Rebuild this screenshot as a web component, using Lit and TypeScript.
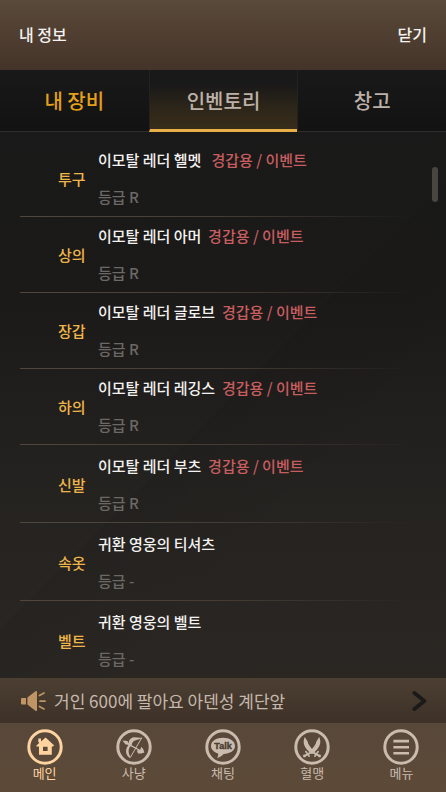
import { LitElement, html, css, svg, nothing } from "lit";
import { customElement, state } from "lit/decorators.js";
import { classMap } from "lit/directives/class-map.js";

interface Gear {
  slot: string;
  name: string;
  tag?: string;
  grade: string;
  roomy?: boolean;
}

const GEAR: Gear[] = [
  { slot: "투구", name: "이모탈 레더 헬멧   ", tag: "경갑용 / 이벤트", grade: "R" },
  { slot: "상의", name: "이모탈 레더 아머  ", tag: "경갑용 / 이벤트", grade: "R" },
  { slot: "장갑", name: "이모탈 레더 글로브  ", tag: "경갑용 / 이벤트", grade: "R" },
  { slot: "하의", name: "이모탈 레더 레깅스  ", tag: "경갑용 / 이벤트", grade: "R" },
  { slot: "신발", name: "이모탈 레더 부츠  ", tag: "경갑용 / 이벤트", grade: "R", roomy: true },
  { slot: "속옷", name: "귀환 영웅의 티셔츠", grade: "-", roomy: true },
  { slot: "벨트", name: "귀환 영웅의 벨트", grade: "-", roomy: true },
];

const TABS = ["내 장비", "인벤토리", "창고"];

const ring = svg`<circle cx="18" cy="18" r="16.2" fill="none" stroke="currentColor" stroke-width="3"/>`;

const house = svg`
  <path fill="currentColor" fill-rule="evenodd"
    d="M18.6 8.6 L27.2 16.6 L25.8 17.6 H24.8 V25.8 H12 V17.6 H9.6 L9.2 16.8 L12.4 13.8 L11.3 13 V9.4 H14 V12.4 Z M16 17.8 V22 H20.6 V17.8 Z"/>`;

const bow = svg`
  <path fill="currentColor"
    d="M26.4 8.4 C24.6 10.4 22 10.2 19.6 11.2 C16.8 12.2 16 13.8 15.8 16 C13.4 18.2 12.6 20 12.6 22.4 C12.6 25 14.4 26.6 14.2 29.2 C11.4 27.4 9.8 25 10 21.8 C10.2 19 11.6 17 12.8 15.8 C12.2 12.6 13.4 9.8 16.6 8.6 C20 7.6 23.2 9.6 26.4 8.4 Z"/>
  <path fill="none" stroke="currentColor" stroke-width="1" d="M25.8 8.8 L14.2 28.6"/>
  <path fill="none" stroke="currentColor" stroke-width="1.4" d="M9 13.4 L25 22"/>
  <path fill="currentColor"
    d="M6.4 11.6 L11.4 12 L13.4 15.4 L9.6 15.6 Z M20.8 21.6 L24.2 20.8 L25.4 17.8 L27.4 20.4 L28.4 23.6 L25.4 24.6 L22 24.6 Z"/>`;

const talk = svg`
  <path fill="currentColor"
    d="M18 8.8 C24.8 8.8 30 12 30 17 C30 21.6 25 24.8 18.6 25 C16.9 27 14.4 28.6 11.9 29.1 C13 27.6 13.4 26 13 24.4 C9 23.2 6 20.6 6 17 C6 12 11.2 8.8 18 8.8 Z"/>
  <text class="talk" x="18" y="20" text-anchor="middle">Talk</text>`;

const swords = svg`
  <g fill="currentColor">
    <path d="M10.8 8 C8.4 13.6 9.6 18.6 17.8 25 L20.6 22.4 C16.4 18.6 14 15 13.6 12.4 Z"/>
    <path d="M25.2 8 C27.6 13.6 26.4 18.6 18.2 25 L15.4 22.4 C19.6 18.6 22 15 22.4 12.4 Z"/>
  </g>
  <g fill="none" stroke="currentColor" stroke-linecap="round">
    <path stroke-width="2" d="M17 23.4 L10.8 26.8 M19 23.4 L25.2 26.8"/>
    <path stroke-width="1.6" d="M11.8 22.6 L15.2 27.2 M24.2 22.6 L20.8 27.2"/>
  </g>
  <circle cx="10.4" cy="27" r="1.4" fill="currentColor"/>
  <circle cx="25.6" cy="27" r="1.4" fill="currentColor"/>`;

const bars = svg`<path fill="currentColor" d="M10.4 10.8 H26 V13.4 H10.4 Z M10.4 16.9 H26 V19.5 H10.4 Z M10.4 23 H26 V25.6 H10.4 Z"/>`;

const NAV = [
  { label: "메인", icon: house, current: true },
  { label: "사냥", icon: bow },
  { label: "채팅", icon: talk },
  { label: "혈맹", icon: swords },
  { label: "메뉴", icon: bars },
];

@customElement("app-root")
export class AppRoot extends LitElement {
  @state() private selected = 1;

  static styles = css`
    :host {
      display: flex;
      flex-direction: column;
      min-height: 100vh;
      font-family: "Noto Sans CJK KR", "Noto Sans", sans-serif;
      font-size: 15px;
      line-height: 20px;
      color: #f4f2f0;
      background: linear-gradient(#191919 70px, #1b1a19 300px, #252320 500px, #2d2925);
    }
    button {
      font: inherit;
      color: inherit;
      background: none;
      border: 0;
      margin: 0;
      padding: 0;
      cursor: pointer;
    }
    svg {
      display: block;
    }
    .header {
      display: flex;
      align-items: center;
      justify-content: space-between;
      box-sizing: border-box;
      height: 70px;
      padding: 0 19px 2px;
      font-size: 16px;
      font-weight: 500;
      background: linear-gradient(#5a4a3a, #443328);
    }
    .title {
      margin: 0;
      font: inherit;
    }
    .tabs {
      display: grid;
      grid-template-columns: repeat(3, 1fr);
      height: 62px;
      background: linear-gradient(#191919, #121212);
    }
    .tab {
      font-size: 20px;
      font-weight: 500;
      color: #bcb1a8;
      border-bottom: 1px solid #302e2c;
    }
    .tab + .tab {
      border-left: 1px solid #24221f;
    }
    .tab.mine {
      color: #e5a01a;
    }
    .tab.active {
      padding-top: 2px;
      border-bottom: 3px solid #e9b04a;
      background: linear-gradient(#1a1919 25%, #2d2619 65%, #382d1a);
    }
    .content {
      position: relative;
      flex: 1;
    }
    .list {
      list-style: none;
      margin: 0;
      padding: 9px 20px 0;
      background: linear-gradient(135deg, transparent 50%, rgba(0, 0, 0, 0.06) 50%, transparent 70%);
    }
    .row {
      display: grid;
      grid-template-columns: 78px 1fr;
      align-items: center;
      padding: 9px 0;
      border-bottom: 1px solid;
      border-image: linear-gradient(90deg, #51473d, #453d35 50%, transparent 97%) 1;
    }
    .row.roomy {
      padding-top: 11px;
    }
    .row:last-child {
      border-bottom: 0;
    }
    .slot {
      padding-left: 38px;
      font-weight: 500;
      color: #efb54a;
    }
    .info {
      display: grid;
      gap: 17px;
      font-weight: 500;
    }
    .name {
      white-space: pre-wrap;
    }
    .tag {
      color: #c85d5f;
    }
    .grade {
      color: #6b6866;
    }
    .thumb {
      position: absolute;
      top: 35px;
      right: 8px;
      width: 6px;
      height: 35px;
      border-radius: 3px;
      background: #494541;
    }
    .notice {
      display: flex;
      align-items: center;
      box-sizing: border-box;
      width: 100%;
      height: 45px;
      padding: 0 19px 0 20px;
      gap: 8px;
      font-size: 17px;
      text-align: left;
      color: #c5b8ac;
      background: linear-gradient(#4c3f32, #3d3128);
    }
    .message {
      flex: 1;
    }
    .horn {
      color: #bf9566;
    }
    .arrow {
      color: #1c1a18;
    }
    .nav {
      display: grid;
      grid-template-columns: repeat(5, 1fr);
      height: 69px;
      background: linear-gradient(#58483a, #5d4a38);
    }
    .item {
      display: flex;
      flex-direction: column;
      align-items: center;
      padding-top: 6px;
      font-size: 13px;
      line-height: 16px;
      color: #c9bbae;
      text-decoration: none;
    }
    .item.current {
      color: #ffd3a0;
    }
    .talk {
      font-family: "Liberation Sans", sans-serif;
      font-size: 9px;
      font-weight: 700;
      fill: #4a3c30;
      stroke: #4a3c30;
      stroke-width: 0.4px;
    }
  `;

  render() {
    return html`
      <header class="header">
        <h1 class="title">내 정보</h1>
        <button type="button">닫기</button>
      </header>
      <div class="tabs" role="tablist">
        ${TABS.map(
          (label, i) => html`<button
            type="button"
            role="tab"
            aria-selected=${i === this.selected ? "true" : "false"}
            class=${classMap({ tab: true, mine: i === 0, active: i === this.selected })}
            @click=${() => (this.selected = i)}
          >${label}</button>`
        )}
      </div>
      <main class="content">
        <ul class="list">
          ${GEAR.map(
            (g) => html`<li class=${classMap({ row: true, roomy: !!g.roomy })}>
              <span class="slot">${g.slot}</span>
              <div class="info">
                <div class="name">${g.name}${g.tag ? html`<span class="tag">${g.tag}</span>` : nothing}</div>
                <div class="grade">등급 ${g.grade}</div>
              </div>
            </li>`
          )}
        </ul>
        <div class="thumb"></div>
      </main>
      <button type="button" class="notice">
        <svg class="horn" width="26" height="22" viewBox="0 0 26 22" aria-hidden="true">
          <path fill="currentColor" d="M2 8 H6 V14.4 H2 Q1 14.4 1 13.4 V9 Q1 8 2 8 Z M7.4 7.6 L15.4 1.2 Q17 0.4 17 2 V20 Q17 21.6 15.4 20.8 L7.4 14.4 Z"/>
          <path fill="none" stroke="currentColor" stroke-width="1.7" stroke-linecap="round" d="M19.4 5.6 L24 3 M20 11.2 H25 M19.4 16.4 L24 19"/>
        </svg>
        <span class="message">거인 600에 팔아요 아덴성 계단앞</span>
        <svg class="arrow" width="15" height="22" viewBox="0 0 15 22" aria-hidden="true">
          <path fill="none" stroke="currentColor" stroke-width="3.8" stroke-linecap="round" stroke-linejoin="round" d="M2.4 3 L12.4 11 L2.4 19"/>
        </svg>
      </button>
      <nav class="nav">
        ${NAV.map(
          (n) => html`<a href="#" class=${classMap({ item: true, current: !!n.current })}>
            <svg width="36" height="36" viewBox="0 0 36 36" aria-hidden="true">${ring}${n.icon}</svg>
            <span>${n.label}</span>
          </a>`
        )}
      </nav>
    `;
  }
}
